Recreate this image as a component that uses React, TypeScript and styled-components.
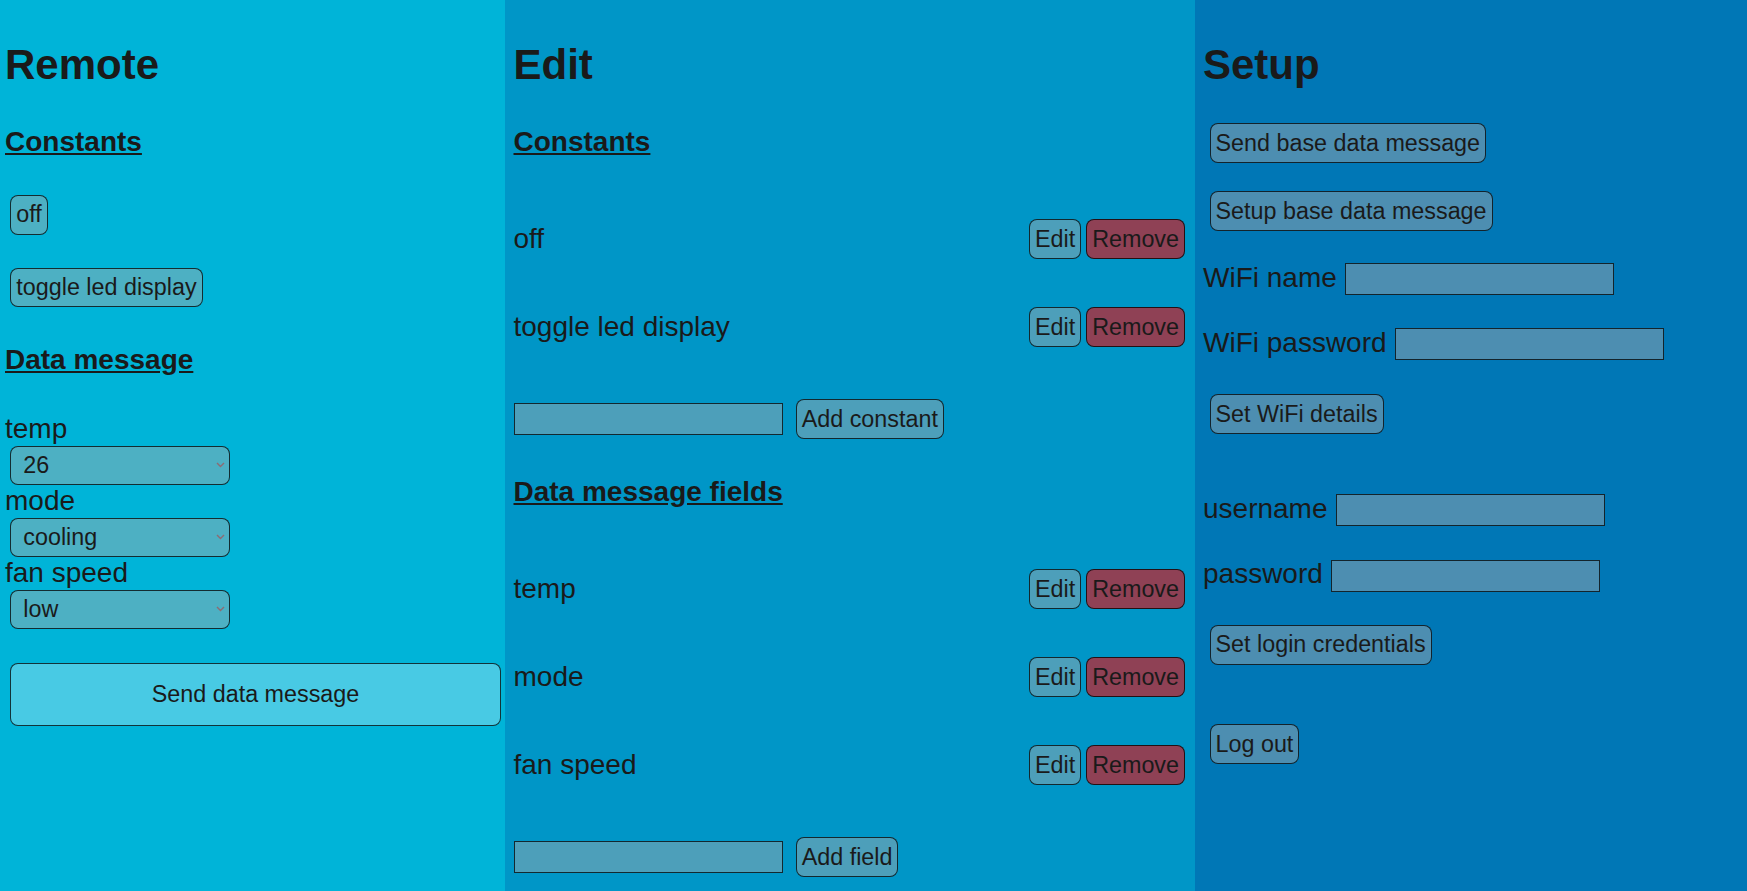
import React from "react";
import styled, { createGlobalStyle } from "styled-components";

const GlobalStyle = createGlobalStyle`
  html, body {
    margin: 0;
    padding: 0;
  }
  body {
    font-family: "Liberation Sans", Arial, sans-serif;
    color: #1a1a1a;
  }
  * {
    box-sizing: border-box;
  }
`;

const Page = styled.div`
  display: grid;
  grid-template-columns: 505px 690px 1fr;
  min-height: 100vh;
`;

const Column = styled.section<{ $bg: string; $padLeft: number; $padRight?: number }>`
  background: ${(p) => p.$bg};
  padding: 6px ${(p) => p.$padRight ?? 0}px 0 ${(p) => p.$padLeft}px;
  display: flex;
  flex-direction: column;
  align-items: flex-start;
  font-size: 28px;
  line-height: 32px;
`;

const Title = styled.h1`
  margin: 35px 0 0;
  font-size: 42px;
  line-height: 48px;
  font-weight: 700;
`;

const SectionHeading = styled.h4<{ $mt: number }>`
  margin: ${(p) => p.$mt}px 0 0;
  font-size: 28px;
  line-height: 32px;
  font-weight: 700;
  text-decoration: underline;
`;

const Button = styled.button<{ $danger?: boolean; $mt?: number; $ml?: number }>`
  font-family: inherit;
  font-size: 23.33px;
  line-height: normal;
  color: #1a1a1a;
  background: ${(p) => (p.$danger ? "#8f4155" : "rgba(170, 170, 170, 0.45)")};
  border: 1px solid rgba(0, 0, 0, 0.75);
  border-radius: 8px;
  padding: 5.25px 5px;
  margin: ${(p) => p.$mt ?? 0}px 0 0 ${(p) => p.$ml ?? 0}px;
  white-space: nowrap;
  cursor: pointer;
`;

const ButtonStack = styled.div<{ $mt: number }>`
  display: flex;
  flex-direction: column;
  align-items: flex-start;
  gap: 33px;
  margin-top: ${(p) => p.$mt}px;
  padding-left: 5.3px;
`;

const FieldList = styled.div<{ $mt: number }>`
  display: flex;
  flex-direction: column;
  align-items: flex-start;
  margin-top: ${(p) => p.$mt}px;
`;

const FieldLabel = styled.label`
  display: block;
  font-size: 28px;
  line-height: 32px;
`;

const SelectWrap = styled.div`
  position: relative;
  width: 220px;
  margin: 1px 0 0 5.3px;
`;

const Select = styled.select`
  appearance: none;
  -webkit-appearance: none;
  display: block;
  width: 100%;
  height: 39px;
  font-family: inherit;
  font-size: 23.33px;
  color: #1a1a1a;
  background: rgba(170, 170, 170, 0.45);
  border: 1px solid rgba(0, 0, 0, 0.75);
  border-radius: 8px;
  padding: 0 24px 0 12px;
  margin: 0;
`;

const Chevron = styled.svg`
  position: absolute;
  right: 5px;
  top: 50%;
  width: 9px;
  height: 6px;
  transform: translateY(-50%);
  pointer-events: none;
`;

const SendButton = styled.button`
  width: 490.4px;
  height: 63px;
  margin: 34px 0 0 5.3px;
  font-family: inherit;
  font-size: 23.33px;
  color: #1a1a1a;
  background: #48cae4;
  border: 1px solid rgba(0, 0, 0, 0.75);
  border-radius: 8px;
  cursor: pointer;
`;

const ItemList = styled.div<{ $mt: number }>`
  width: 100%;
  margin-top: ${(p) => p.$mt}px;
  display: flex;
  flex-direction: column;
`;

const ItemRow = styled.div`
  height: 88px;
  display: flex;
  align-items: center;
  justify-content: space-between;
`;

const ItemName = styled.span`
  font-size: 28px;
  line-height: 32px;
  padding-bottom: 1px;
`;

const ItemActions = styled.div`
  display: flex;
  gap: 5px;
`;

const AddRow = styled.div`
  display: flex;
  align-items: center;
  gap: 13.2px;
  padding-top: 28.3px;
`;

const TextInput = styled.input<{ $ml?: number }>`
  width: 269px;
  height: 32px;
  margin: 0 0 0 ${(p) => p.$ml ?? 0}px;
  padding: 1px 3px;
  font-family: inherit;
  font-size: 23.33px;
  color: #1a1a1a;
  background: rgba(170, 170, 170, 0.45);
  border: 1px solid rgba(0, 0, 0, 0.75);
  border-radius: 0;
`;

const SettingRow = styled.div<{ $mt: number }>`
  display: flex;
  align-items: baseline;
  gap: 8.5px;
  margin-top: ${(p) => p.$mt}px;
`;

const SettingLabel = styled.label`
  font-size: 28px;
  line-height: 32px;
  white-space: nowrap;
`;

const ChevronIcon = () => (
  <Chevron viewBox="0 0 9 6">
    <path d="M1 1 L4.5 4.5 L8 1" fill="none" stroke="#8d6b73" strokeWidth="1.4" />
  </Chevron>
);

const SelectField = ({ label, value, options }: { label: string; value: string; options: string[] }) => (
  <>
    <FieldLabel>{label}</FieldLabel>
    <SelectWrap>
      <Select defaultValue={value}>
        {options.map((o) => (
          <option key={o} value={o}>
            {o}
          </option>
        ))}
      </Select>
      <ChevronIcon />
    </SelectWrap>
  </>
);

const EditItem = ({ name }: { name: string }) => (
  <ItemRow>
    <ItemName>{name}</ItemName>
    <ItemActions>
      <Button>Edit</Button>
      <Button $danger>Remove</Button>
    </ItemActions>
  </ItemRow>
);

const constants = ["off", "toggle led display"];
const fields = ["temp", "mode", "fan speed"];

export default function App() {
  return (
    <>
      <GlobalStyle />
      <Page>
        <Column $bg="#00b4d8" $padLeft={5}>
          <Title>Remote</Title>
          <SectionHeading $mt={37}>Constants</SectionHeading>
          <ButtonStack $mt={37}>
            {constants.map((c) => (
              <Button key={c}>{c}</Button>
            ))}
          </ButtonStack>
          <SectionHeading $mt={36.5}>Data message</SectionHeading>
          <FieldList $mt={37}>
            <SelectField label="temp" value="26" options={["16", "17", "18", "19", "20", "21", "22", "23", "24", "25", "26", "27", "28", "29", "30"]} />
            <SelectField label="mode" value="cooling" options={["cooling", "heating", "dry", "fan", "auto"]} />
            <SelectField label="fan speed" value="low" options={["low", "medium", "high", "auto"]} />
          </FieldList>
          <SendButton>Send data message</SendButton>
        </Column>

        <Column $bg="#0096c7" $padLeft={8.5} $padRight={10}>
          <Title>Edit</Title>
          <SectionHeading $mt={37}>Constants</SectionHeading>
          <ItemList $mt={37}>
            {constants.map((c) => (
              <EditItem key={c} name={c} />
            ))}
          </ItemList>
          <AddRow>
            <TextInput $ml={0} />
            <Button>Add constant</Button>
          </AddRow>
          <SectionHeading $mt={37}>Data message fields</SectionHeading>
          <ItemList $mt={37.4}>
            {fields.map((f) => (
              <EditItem key={f} name={f} />
            ))}
          </ItemList>
          <AddRow>
            <TextInput $ml={0} />
            <Button>Add field</Button>
          </AddRow>
        </Column>

        <Column $bg="#0077b6" $padLeft={8}>
          <Title>Setup</Title>
          <Button $mt={34.3} $ml={6.5}>Send base data message</Button>
          <Button $mt={28.7} $ml={6.5}>Setup base data message</Button>
          <SettingRow $mt={30.8}>
            <SettingLabel>WiFi name</SettingLabel>
            <TextInput />
          </SettingRow>
          <SettingRow $mt={31.5}>
            <SettingLabel>WiFi password</SettingLabel>
            <TextInput type="password" />
          </SettingRow>
          <Button $mt={34} $ml={6.5}>Set WiFi details</Button>
          <SettingRow $mt={59}>
            <SettingLabel>username</SettingLabel>
            <TextInput />
          </SettingRow>
          <SettingRow $mt={32}>
            <SettingLabel>password</SettingLabel>
            <TextInput type="password" />
          </SettingRow>
          <Button $mt={33.3} $ml={6.5}>Set login credentials</Button>
          <Button $mt={59.7} $ml={6.5}>Log out</Button>
        </Column>
      </Page>
    </>
  );
}
